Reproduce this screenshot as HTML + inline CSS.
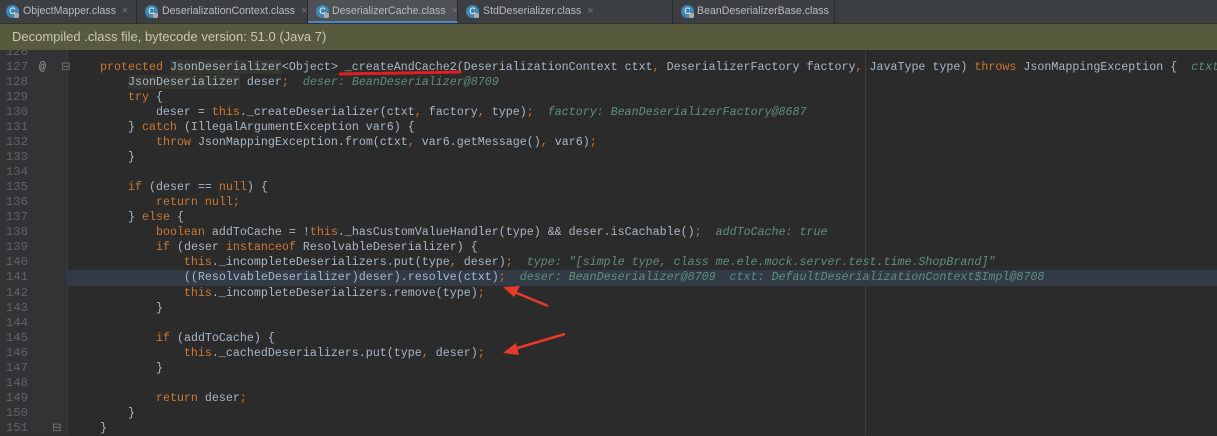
<!DOCTYPE html>
<html><head><meta charset="utf-8"><style>
body{margin:0;width:1217px;height:435px;overflow:hidden;background:#2b2b2b;font-family:"Liberation Sans",sans-serif;position:relative}
.tabs{position:absolute;left:0;top:0;width:1217px;height:23px;background:#3c3f41;border-bottom:1px solid #323232}
.tab{position:absolute;top:0;height:23px;border-right:1px solid #2b2b2b;color:#bbbbbb;font-size:10.6px;line-height:23px;box-sizing:border-box;white-space:nowrap;overflow:hidden}
.tab.act{background:#4e5254;border-bottom:2px solid #4a88c7}
.ic{position:absolute;top:5px;width:13px;height:13px;border-radius:50%;background:#3f87b5;color:#fff;font-size:9px;line-height:13px;text-align:center}
.ic:after{content:"";position:absolute;left:8px;top:8px;width:5px;height:5px;background:#aaa;border-radius:1px}
.x{color:#777;margin-left:6px}
.banner{position:absolute;left:0;top:24px;width:1217px;height:26px;background:#585a3e;color:#c8c8b4;font-size:13px;line-height:26px;z-index:3}
.banner span{margin-left:12px}
.gut{position:absolute;left:0;top:24px;width:67px;height:411px;background:#313335;border-right:1px solid #3a3a3a}
.code{position:absolute;left:0;top:45px;font-family:"Liberation Mono",monospace;font-size:11.67px;color:#a9b7c6}
.l{height:15.04px;line-height:15.04px;position:relative;width:1217px;white-space:pre}
.n{position:absolute;left:0;width:28px;text-align:right;color:#606366;font-size:12.3px}
.t{position:absolute;left:72px}
.k{color:#cc7832}.d{color:#5f8f7c;font-style:italic}.hl{background:#323b45}
.g{background:#34362f}
</style></head><body>
<div class="tabs">
<div class="tab" style="left:0;width:137px"><div class="ic" style="left:6px">C</div><span style="margin-left:23px">ObjectMapper.class</span><span class="x">×</span></div>
<div class="tab" style="left:137px;width:171px"><div class="ic" style="left:8px">C</div><span style="margin-left:25px">DeserializationContext.class</span><span class="x">×</span></div>
<div class="tab act" style="left:308px;width:150px"><div class="ic" style="left:8px">C</div><span style="margin-left:24px">DeserializerCache.class</span><span class="x">×</span></div>
<div class="tab" style="left:458px;width:215px"><div class="ic" style="left:8px">C</div><span style="margin-left:25px">StdDeserializer.class</span><span class="x">×</span></div>
<div class="tab" style="left:673px;width:162px"><div class="ic" style="left:8px">C</div><span style="margin-left:24px">BeanDeserializerBase.class</span><span class="x">×</span></div>
</div>
<div class="banner"><span>Decompiled .class file, bytecode version: 51.0 (Java 7)</span></div>
<div class="gut"></div>
<div style="position:absolute;left:865px;top:50px;width:1px;height:385px;background:#3d3d3d"></div>
<div class="code">
<div class="l"><span class="n">126</span></div>
<div class="l"><span class="n">127</span><span style="position:absolute;left:39px;color:#a0a0a0">@</span><span style="position:absolute;left:61px;color:#777">⊟</span><span class="t"><span class="k">    protected </span><span class="g">JsonDeserializer</span>&lt;Object&gt; _createAndCache2(DeserializationContext ctxt<span class="k">, </span>DeserializerFactory factory<span class="k">, </span>JavaType type) <span class="k">throws </span>JsonMappingException {  <span class="d">ctxt</span></span></div>
<div class="l"><span class="n">128</span><span class="t">        <span class="g">JsonDeserializer</span> deser<span class="k">;</span>  <span class="d">deser: BeanDeserializer@8709</span></span></div>
<div class="l"><span class="n">129</span><span class="t">        <span class="k">try</span> {</span></div>
<div class="l"><span class="n">130</span><span class="t">            deser = <span class="k">this</span>._createDeserializer(ctxt<span class="k">, </span>factory<span class="k">, </span>type)<span class="k">;</span>  <span class="d">factory: BeanDeserializerFactory@8687</span></span></div>
<div class="l"><span class="n">131</span><span class="t">        } <span class="k">catch </span>(IllegalArgumentException var6) {</span></div>
<div class="l"><span class="n">132</span><span class="t">            <span class="k">throw </span>JsonMappingException.from(ctxt<span class="k">, </span>var6.getMessage()<span class="k">, </span>var6)<span class="k">;</span></span></div>
<div class="l"><span class="n">133</span><span class="t">        }</span></div>
<div class="l"><span class="n">134</span></div>
<div class="l"><span class="n">135</span><span class="t">        <span class="k">if </span>(deser == <span class="k">null</span>) {</span></div>
<div class="l"><span class="n">136</span><span class="t">            <span class="k">return null;</span></span></div>
<div class="l"><span class="n">137</span><span class="t">        } <span class="k">else </span>{</span></div>
<div class="l"><span class="n">138</span><span class="t">            <span class="k">boolean </span>addToCache = !<span class="k">this</span>._hasCustomValueHandler(type) &amp;&amp; deser.isCachable()<span class="k">;</span>  <span class="d">addToCache: true</span></span></div>
<div class="l"><span class="n">139</span><span class="t">            <span class="k">if </span>(deser <span class="k">instanceof </span>ResolvableDeserializer) {</span></div>
<div class="l"><span class="n">140</span><span class="t">                <span class="k">this</span>._incompleteDeserializers.put(type<span class="k">, </span>deser)<span class="k">;</span>  <span class="d">type: "[simple type, class me.ele.mock.server.test.time.ShopBrand]"</span></span></div>
<div class="l hl" style="margin-left:67px;width:1150px"><span class="n" style="left:-67px">141</span><span class="t" style="left:5px">                ((ResolvableDeserializer)deser).resolve(ctxt)<span class="k">;</span>  <span class="d">deser: BeanDeserializer@8709  ctxt: DefaultDeserializationContext$Impl@8708</span></span></div>
<div class="l"><span class="n">142</span><span class="t">                <span class="k">this</span>._incompleteDeserializers.remove(type)<span class="k">;</span></span></div>
<div class="l"><span class="n">143</span><span class="t">            }</span></div>
<div class="l"><span class="n">144</span></div>
<div class="l"><span class="n">145</span><span class="t">            <span class="k">if </span>(addToCache) {</span></div>
<div class="l"><span class="n">146</span><span class="t">                <span class="k">this</span>._cachedDeserializers.put(type<span class="k">, </span>deser)<span class="k">;</span></span></div>
<div class="l"><span class="n">147</span><span class="t">            }</span></div>
<div class="l"><span class="n">148</span></div>
<div class="l"><span class="n">149</span><span class="t">            <span class="k">return </span>deser<span class="k">;</span></span></div>
<div class="l"><span class="n">150</span><span class="t">        }</span></div>
<div class="l"><span class="n">151</span><span style="position:absolute;left:52px;color:#777">⊟</span><span class="t">    }</span></div>
</div>
<svg style="position:absolute;left:0;top:0" width="1217" height="435">
<line x1="340" y1="74" x2="460" y2="72" stroke="#e02020" stroke-width="3" stroke-linecap="round"/>
<line x1="548" y1="306" x2="512" y2="291" stroke="#e83a2a" stroke-width="2.5"/>
<polygon points="503,287 520,286 514,297" fill="#e83a2a"/>
<line x1="565" y1="334" x2="514" y2="349" stroke="#e83a2a" stroke-width="2.5"/>
<polygon points="503,353 516,343 519,355" fill="#e83a2a"/>
</svg>
</body></html>
